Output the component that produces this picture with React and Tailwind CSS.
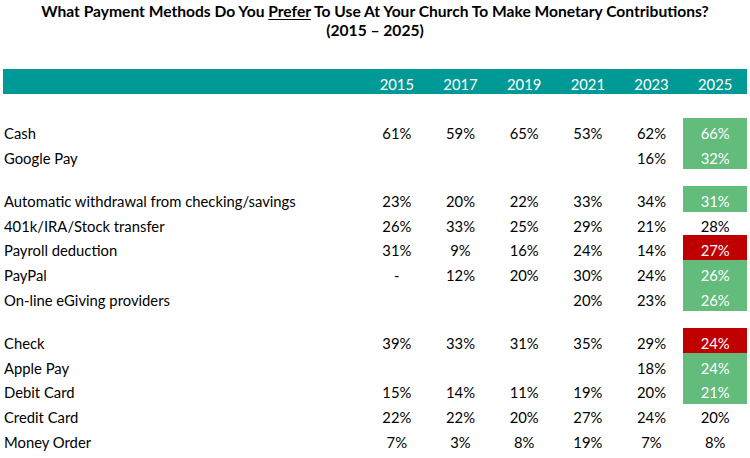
const years = ['2015', '2017', '2019', '2021', '2023', '2025']

// last cell tone: g = green, r = red, null = plain
const groups = [
  [
    ['Cash', ['61%', '59%', '65%', '53%', '62%', '66%'], 'g'],
    ['Google Pay', ['', '', '', '', '16%', '32%'], 'g'],
  ],
  [
    ['Automatic withdrawal from checking/savings', ['23%', '20%', '22%', '33%', '34%', '31%'], 'g'],
    ['401k/IRA/Stock transfer', ['26%', '33%', '25%', '29%', '21%', '28%'], null],
    ['Payroll deduction', ['31%', '9%', '16%', '24%', '14%', '27%'], 'r'],
    ['PayPal', ['-', '12%', '20%', '30%', '24%', '26%'], 'g'],
    ['On-line eGiving providers', ['', '', '', '20%', '23%', '26%'], 'g'],
  ],
  [
    ['Check', ['39%', '33%', '31%', '35%', '29%', '24%'], 'r'],
    ['Apple Pay', ['', '', '', '', '18%', '24%'], 'g'],
    ['Debit Card', ['15%', '14%', '11%', '19%', '20%', '21%'], 'g'],
    ['Credit Card', ['22%', '22%', '20%', '27%', '24%', '20%'], null],
    ['Money Order', ['7%', '3%', '8%', '19%', '7%', '8%'], null],
  ],
]

function Row({ label, values, tone }) {
  return (
    <div className="grid grid-cols-[362px_repeat(6,1fr)] h-[24.6px] items-stretch">
      <div className="pl-[1px] pt-[4px] flex items-center">{label}</div>
      {values.map((v, i) => {
        const last = i === values.length - 1
        let cls = 'flex items-center justify-center pt-[4px]'
        if (last && tone === 'g') cls += ' bg-[#63bb7c] text-white'
        if (last && tone === 'r') cls += ' bg-[#c00000] text-white'
        return <div key={i} className={cls}>{v}</div>
      })}
    </div>
  )
}

export default function App() {
  return (
    <div className="w-[750px] h-[458px] bg-white text-black px-[3px] font-['Lato','Liberation_Sans',sans-serif] text-[14.8px] overflow-hidden">
      <div className="pt-[2px] text-center font-bold text-[15.6px] leading-[19px]">
        <div>
          What Payment Methods Do You <span className="underline underline-offset-2">Prefer</span> To Use At Your Church To Make Monetary Contributions?
        </div>
        <div>(2015 – 2025)</div>
      </div>

      <div className="mt-[29px] h-[25px] bg-[#009a96] text-white grid grid-cols-[362px_repeat(6,1fr)] items-center pt-[4px]">
        <div />
        {years.map(y => (
          <div key={y} className="text-center">{y}</div>
        ))}
      </div>

      <div className="mt-[24px] flex flex-col gap-[19px]">
        {groups.map((g, gi) => (
          <div key={gi}>
            {g.map(([label, values, tone]) => (
              <Row key={label} label={label} values={values} tone={tone} />
            ))}
          </div>
        ))}
      </div>
    </div>
  )
}
